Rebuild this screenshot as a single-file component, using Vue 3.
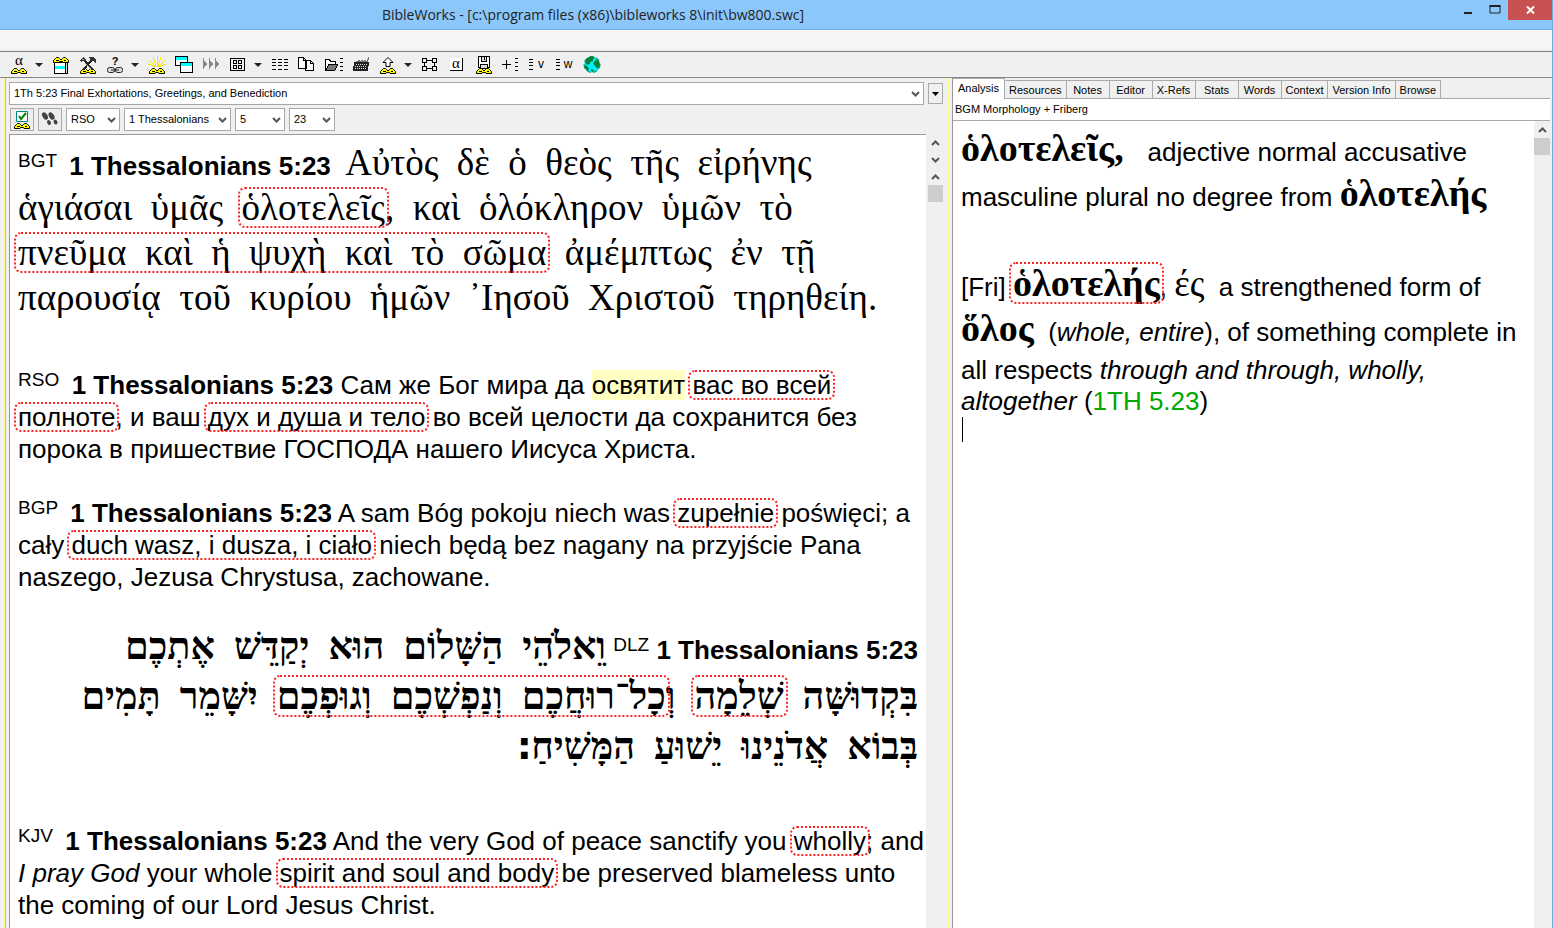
<script setup>
import { ref } from 'vue'

const tools = [
  { id: 'alpha', label: 'Command line', menu: true },
  { id: 'search', label: 'Search window' },
  { id: 'hammer', label: 'Tools' },
  { id: 'link', label: 'Help links', menu: true },
  { id: 'sun', label: 'Daylight mode' },
  { id: 'windows', label: 'Windows' },
  { id: 'parallel', label: 'Parallel versions' },
  { id: 'grid', label: 'Layout', menu: true },
  { id: 'lists', label: 'Verse lists' },
  { id: 'copy', label: 'Copy' },
  { id: 'folder', label: 'Open list' },
  { id: 'keyboard', label: 'Keyboard' },
  { id: 'up', label: 'Export', menu: true },
  { id: 'graph', label: 'Graph' },
  { id: 'lexicon', label: 'Lexicon' },
  { id: 'save', label: 'Save' },
  { id: 'add', label: 'Add to list' },
  { id: 'verse', label: 'Verse list' },
  { id: 'word', label: 'Word list' },
  { id: 'globe', label: 'Web' }
]
const tabs = ['Analysis', 'Resources', 'Notes', 'Editor', 'X-Refs', 'Stats', 'Words', 'Context', 'Version Info', 'Browse']
const active = ref('Analysis')

// Greek and Hebrew runs keep their double spaces between words.
const greek = [
  [{ t: 'Αὐτὸς  δὲ  ὁ  θεὸς  τῆς  εἰρήνης' }],
  [{ t: 'ἁγιάσαι  ὑμᾶς  ' }, { t: 'ὁλοτελεῖς', m: true }, { t: ',  καὶ  ὁλόκληρον  ὑμῶν  τὸ' }],
  [{ t: 'πνεῦμα  καὶ  ἡ  ψυχὴ  καὶ  τὸ  σῶμα', m: true }, { t: '  ἀμέμπτως  ἐν  τῇ' }],
  [{ t: 'παρουσίᾳ  τοῦ  κυρίου  ἡμῶν  ᾿Ιησοῦ  Χριστοῦ  τηρηθείη.' }]
]
const hebrew = [
  [{ t: 'וֵאלֹהֵי  הַשָּׁלוֹם  הוּא  יְקַדֵּשׁ  אֶתְכֶם' }],
  [{ t: 'בִּקְדוּשָּׁה  ' }, { t: 'שְׁלֵמָה', m: true }, { t: '  וְ' }, { t: 'כָל־רוּחֲכֶם  וְנַפְשְׁכֶם  וְגוּפְכֶם', m: true }, { t: '  יִשָּׁמֵר  תָּמִים' }],
  [{ t: 'בְּבוֹא  אֲדֹנֵינוּ  יֵשׁוּעַ  הַמָּשִׁיחַ' }, { t: '׃', end: true }]
]
</script>

<template>
  <div class="window">
    <svg class="defs" width="0" height="0" aria-hidden="true">
      <symbol id="book" viewBox="0 0 18 7">
        <path d="M1.500 6.500v-2l2-2 1-1h2l1 1L9 4l1.500-1.500 1-1h2l1 1 2 2v2H11l-.5-1h-3l-.5 1z" fill="#ff0" stroke="#000" shape-rendering="auto" />
        <path d="M4 4.500h2.500M11.500 4.500H14" stroke="#000" shape-rendering="crispEdges" />
      </symbol>
      <symbol id="chev" viewBox="0 0 9 6"><path d="M1 1l3.500 3.500L8 1" fill="none" stroke="#555" stroke-width="2" /></symbol>
    </svg>

    <header class="titlebar">
      <h1>BibleWorks - [c:\program files (x86)\bibleworks 8\init\bw800.swc]</h1>
      <div class="controls">
        <button aria-label="Minimize"><svg width="10" height="10"><path d="M1 8h8" stroke="#222" stroke-width="2" /></svg></button>
        <button aria-label="Maximize"><svg width="12" height="10"><path d="M1 1h10v7H1z" fill="none" stroke="#222" stroke-width="1" /><path d="M.5 1h11" stroke="#222" stroke-width="2" /></svg></button>
        <button class="close" aria-label="Close"><svg width="9" height="8"><path d="M1 .5l7 7M8 .5l-7 7" stroke="#fff" stroke-width="2" /></svg></button>
      </div>
    </header>
    <div class="menustrip"></div>

    <nav class="toolbar" aria-label="Tools">
      <template v-for="t in tools" :key="t.id">
        <button class="tool" :aria-label="t.label">
          <svg width="18" height="18" viewBox="0 0 18 18" shape-rendering="crispEdges">
            <template v-if="t.id === 'alpha'">
              <text x="9" y="9" class="glyph">α</text>
              <use href="#book" x="0" y="11" width="18" height="7" />
            </template>
            <template v-else-if="t.id === 'search'">
              <path d="M2 6h14v12H2z" fill="#000" /><path d="M3 7h10v10H3z" fill="#fff" /><path d="M14 7h1v10h-1z" fill="#ddd" />
              <path d="M3 10h10v3H3z" fill="#0ff" /><use href="#book" x="0" y="0" width="18" height="7" />
            </template>
            <template v-else-if="t.id === 'hammer'">
              <use href="#book" x="0" y="11" width="18" height="7" />
              <path d="M5 4l9 10M13 4L4 14" fill="none" stroke="#222" stroke-width="2" />
              <path d="M1 4l4-3 2 3-2 2-1-1-2 1zM10 1h4l3 3v3l-3-2h-2z" fill="#333" />
              <path d="M3 4l2-1M6 7l6 6" stroke="#999" />
            </template>
            <template v-else-if="t.id === 'link'">
              <text x="9" y="9" class="glyph mark">?</text>
              <g fill="#ddd" stroke="#222" shape-rendering="auto"><rect x="1.500" y="11.500" width="7" height="5" rx="2" /><rect x="9.500" y="11.500" width="7" height="5" rx="2" /><path d="M5 14h8" /></g>
            </template>
            <template v-else-if="t.id === 'sun'">
              <path d="M9 0v11M5 1l3 9M13 1l-3 9M1 4l7 7M17 4l-7 7M0 8l8 3M18 8l-8 3" stroke="#f8e800" />
              <use href="#book" x="0" y="11" width="18" height="7" />
            </template>
            <template v-else-if="t.id === 'windows'">
              <path d="M.5.500h12v9H.5z" fill="#fff" stroke="#000" /><path d="M1 1h11v3H1z" fill="#0ff" />
              <path d="M5.500 6.500h12v10h-12z" fill="#fff" stroke="#000" /><path d="M6 7h11v3H6z" fill="#0ff" />
            </template>
            <template v-else-if="t.id === 'parallel'">
              <path d="M1 2h1v11H1zM7 2h1v11H7zM13 2h1v11h-1z" fill="#888" />
              <path d="M2 5l3 3-3 3zM8 5l3 3-3 3zM14 5l3 3-3 3z" fill="#888" />
            </template>
            <g v-else-if="t.id === 'grid'" fill="none" stroke="#000">
              <path d="M1.500 2.500h14v12h-14zM4.500 4.500h3v3h-3zM9.500 4.500h3v3h-3zM4.500 9.500h3v3h-3zM9.500 9.500h3v3h-3z" />
            </g>
            <path v-else-if="t.id === 'lists'" d="M1 3.500h16M1 6.500h16M1 9.500h16M1 13.500h16" stroke="#000" stroke-dasharray="4 2" />
            <g v-else-if="t.id === 'copy'" fill="#fff" stroke="#000">
              <path d="M.5 1.500h5l3 3v8h-8zM5.500 1.500v3h3M7.500 4.500h5l3 3v7h-8zM12.500 4.500v3h3" />
            </g>
            <template v-else-if="t.id === 'folder'">
              <path d="M.5 13.500v-10h4l1 2h5v3" fill="#fff" stroke="#000" /><path d="M1 14l3-6h9l-3 6z" fill="#777" stroke="#000" />
              <path d="M15 2.500h3M15 6.500h3M15 10.500h3M15 14.500h3" stroke="#000" />
            </template>
            <template v-else-if="t.id === 'keyboard'">
              <path d="M4 6V5h2V4h1v1h2V4h1v1h2V4h1v1h2V3h1V1" fill="none" stroke="#777" />
              <path d="M2 6h15l-1 9H1z" fill="#222" />
              <path d="M4 8.500h12M3 10.500h12M3 12.500h12" stroke="#ddd" stroke-dasharray="1 1" />
            </template>
            <template v-else-if="t.id === 'up'">
              <path d="M9 1.500l5 5h-3v4H7v-4H4z" fill="#fff" stroke="#000" shape-rendering="auto" />
              <use href="#book" x="0" y="11" width="18" height="7" />
            </template>
            <g v-else-if="t.id === 'graph'" fill="none" stroke="#000">
              <path d="M1.500 2.500h4v4h-4zM11.500 2.500h4v4h-4zM1.500 10.500h4v4h-4zM11.500 10.500h4v4h-4zM6 4.500h5M6 12.500h5M3.500 7v3M13.500 7v3" />
            </g>
            <template v-else-if="t.id === 'lexicon'">
              <path d="M2 2h13v13H2z" fill="#fff" /><path d="M2 14.500h12.500V2" fill="none" stroke="#000" />
              <text x="8" y="12" class="glyph">α</text>
            </template>
            <template v-else-if="t.id === 'save'">
              <path d="M3.500.5h11v11h-11z" fill="#fff" stroke="#000" /><path d="M6.500.5h5v5h-5zM5.500 8.500h7v4h-7z" fill="#ddd" stroke="#000" />
              <path d="M9 1h1v3H9z" /><use href="#book" x="0" y="11" width="18" height="7" />
            </template>
            <path v-else-if="t.id === 'add'" d="M0 8.500h9M4.500 4v9M13 2.500h3M13 6.500h3M13 10.500h3M13 14.500h3" stroke="#000" />
            <template v-else-if="t.id === 'verse' || t.id === 'word'">
              <path d="M0 3.500h4M0 6.500h4M0 9.500h4M0 13.500h4" stroke="#000" />
              <text x="12" y="12" class="glyph latin">{{ t.id === 'verse' ? 'v' : 'w' }}</text>
            </template>
            <g v-else shape-rendering="auto">
              <circle cx="9" cy="8.500" r="8" fill="#0ef" />
              <path d="M4 2l5-2 3 2-2 1v2l-3 1v2l-3 1-2-3zM13 3l3 2 1 4-2 4-3-3-2-3 2-2zM1 9l3 1 2 3-1 2-3-2zM8 13l3 1-1 2-2-1z" fill="#078030" />
              <circle cx="9" cy="8.500" r="8" fill="none" stroke="#087a50" stroke-dasharray="4 3" />
            </g>
          </svg>
        </button>
        <button v-if="t.menu" class="more" :aria-label="t.label + ' options'"><svg width="8" height="4"><path d="M0 0h8L4 4z" fill="#222" /></svg></button>
      </template>
    </nav>

    <main class="body">
      <section class="left">
        <div class="refrow">
          <label class="combo wide">
            <select aria-label="Passage"><option>1Th 5:23 Final Exhortations, Greetings, and Benediction</option></select>
            <svg class="arrow" width="9" height="6"><use href="#chev" /></svg>
          </label>
          <button class="drop" aria-label="History"><svg width="7" height="4"><path d="M0 0h7L3.500 4z" /></svg></button>
        </div>
        <div class="pickrow">
          <button class="sq" aria-label="Versions">
            <svg width="18" height="18" viewBox="0 0 18 18"><path d="M3.500.5h11v10h-11z" fill="#fff" stroke="#088" /><path d="M6 5l2 3 5-6" fill="none" stroke="#080" stroke-width="2" /><use href="#book" y="11" width="18" height="7" /></svg>
          </button>
          <button class="sq" aria-label="Follow">
            <svg width="18" height="18" viewBox="0 0 18 18" fill="#444"><ellipse cx="4" cy="5" rx="2.500" ry="4" transform="rotate(-30 4 5)" /><ellipse cx="8" cy="11.500" rx="1.800" ry="2.500" transform="rotate(-30 8 11.500)" /><ellipse cx="10.500" cy="5" rx="2.500" ry="4" transform="rotate(-30 10.500 5)" /><ellipse cx="14.500" cy="11" rx="1.800" ry="2.500" transform="rotate(-30 14.500 11)" /></svg>
          </button>
          <label class="combo version"><select aria-label="Version"><option>RSO</option></select><svg class="arrow" width="9" height="6"><use href="#chev" /></svg></label>
          <label class="combo bookname"><select aria-label="Book"><option>1 Thessalonians</option></select><svg class="arrow" width="9" height="6"><use href="#chev" /></svg></label>
          <label class="combo chapter"><select aria-label="Chapter"><option>5</option></select><svg class="arrow" width="9" height="6"><use href="#chev" /></svg></label>
          <label class="combo verse"><select aria-label="Verse"><option>23</option></select><svg class="arrow" width="9" height="6"><use href="#chev" /></svg></label>
        </div>
        <div class="reader">
          <div class="verses">
            <article class="greek" lang="el">
              <p v-for="(line, i) in greek" :key="i"><template v-if="i === 0"><sup>{{ 'BGT ' }}</sup> <b>1 Thessalonians 5:23</b>{{ '  ' }}</template><span class="gk"><component :is="r.m ? 'mark' : 'span'" v-for="(r, j) in line" :key="j">{{ r.t }}</component></span></p>
            </article>
            <article>
              <p><sup>{{ 'RSO ' }}</sup> <b>1 Thessalonians 5:23</b> Сам же Бог мира да <span class="hl">освятит</span> <mark>вас во всей</mark></p>
              <p><mark>полноте</mark>, и ваш <mark>дух и душа и тело</mark> во всей целости да сохранится без</p>
              <p>порока в пришествие ГОСПОДА нашего Иисуса Христа.</p>
            </article>
            <article>
              <p><sup>{{ 'BGP ' }}</sup> <b>1 Thessalonians 5:23</b> A sam Bóg pokoju niech was <mark>zupełnie</mark> poświęci; a</p>
              <p>cały <mark>duch wasz, i dusza, i ciało</mark> niech będą bez nagany na przyjście Pana</p>
              <p>naszego, Jezusa Chrystusa, zachowane.</p>
            </article>
            <article class="hebrew" dir="rtl" lang="he">
              <p v-for="(line, i) in hebrew" :key="i"><template v-if="i === 0"><bdi dir="ltr"><b>1 Thessalonians 5:23</b></bdi> <bdi dir="ltr"><sup>DLZ</sup></bdi>{{ ' ' }}</template><span class="hb"><component :is="r.m ? 'mark' : 'span'" v-for="(r, j) in line" :key="j" :class="{ end: r.end }">{{ r.t }}</component></span></p>
            </article>
            <article>
              <p><sup>{{ 'KJV ' }}</sup> <b>1 Thessalonians 5:23</b> And the very God of peace sanctify you <mark>wholly</mark>; and</p>
              <p><i>I pray God</i> your whole <mark>spirit and soul and body</mark> be preserved blameless unto</p>
              <p>the coming of our Lord Jesus Christ.</p>
            </article>
          </div>
          <div class="scroll">
            <button aria-label="Previous verse"><svg class="flip" width="9" height="6"><use href="#chev" /></svg></button>
            <button aria-label="Next verse"><svg width="9" height="6"><use href="#chev" /></svg></button>
            <button aria-label="Scroll up"><svg class="flip" width="9" height="6"><use href="#chev" /></svg></button>
            <div class="thumb"></div>
          </div>
        </div>
      </section>

      <aside class="right">
        <div class="tabs" role="tablist">
          <button v-for="t in tabs" :key="t" role="tab" :aria-selected="active === t" :class="{ on: active === t }" @click="active = t">{{ t }}</button>
        </div>
        <div class="source">BGM Morphology + Friberg</div>
        <div class="reader">
          <div class="analysis">
            <p class="tall"><b class="gk">ὁλοτελεῖς, </b>{{ '  adjective normal accusative' }}</p>
            <p class="tall">masculine plural no degree from <b class="gk">ὁλοτελής</b></p>
            <p class="tall">&nbsp;</p>
            <p class="tall">[Fri] <b class="gk"><mark>ὁλοτελής</mark></b>, <span class="gk">ές</span>{{ '  a strengthened form of' }}</p>
            <p class="tall"><b class="gk">ὅλος</b>{{ '  (' }}<i>whole, entire</i>), of something complete in</p>
            <p>all respects <i>through and through, wholly,</i></p>
            <p><i>altogether</i> (<a href="#1th5.23">1TH 5.23</a>)</p>
            <div class="caret"></div>
          </div>
          <div class="scroll">
            <button aria-label="Scroll up"><svg class="flip" width="9" height="6"><use href="#chev" /></svg></button>
            <div class="thumb"></div>
          </div>
        </div>
      </aside>
    </main>
  </div>
</template>

<style>
html, body { margin: 0; background: #f0f0f0; }
</style>

<style scoped>
* { box-sizing: border-box; }
button { padding: 0; border: 0; background: none; font: inherit; color: inherit; display: flex; align-items: center; justify-content: center; }
p { margin: 0; }
svg { flex: none; overflow: visible; }
.defs { position: absolute; }
.window { height: 100vh; display: flex; flex-direction: column; overflow: hidden; background: #f0f0f0; border-right: 1px solid #6fa9dc; color: #000; font: 11px "Liberation Sans", Arial, sans-serif; }
.titlebar { height: 30px; flex: none; background: #8cc7fb; border-bottom: 1px solid #74addf; display: grid; grid-template-columns: 1fr auto; position: relative; }
h1 { grid-column: 1 / 3; grid-row: 1; margin: 0; padding-right: 366px; text-align: center; font: 14px/29px "Open Sans", "Noto Sans", sans-serif; color: #222; white-space: nowrap; }
.controls { grid-column: 2; grid-row: 1; display: flex; height: 20px; }
.controls button { width: 27px; }
.controls .close { width: 44px; background: #c75050; }
.menustrip { height: 22px; flex: none; background: #f5f6f7; border-bottom: 1px solid #808080; box-shadow: inset 0 -2px #f0f0f0; }
.toolbar { height: 26px; flex: none; display: flex; align-items: stretch; padding-left: 5px; border-bottom: 1px solid #888; }
.tool { width: 27px; }
.more { width: 14px; margin-right: 1px; }
.glyph { font: 15px "Liberation Serif", serif; text-anchor: middle; }
.mark { font: bold 11px "Liberation Sans", sans-serif; }
.latin { font: 12px "Liberation Sans", sans-serif; }
.body { flex: 1; min-height: 0; display: grid; grid-template-columns: minmax(0, 949fr) minmax(0, 603fr); }
.left { display: flex; flex-direction: column; min-height: 0; margin-left: 4px; padding: 4px 5px 0 3px; border-left: 1px solid #ffff90; border-right: 1px solid #ffff90; box-shadow: inset 1px 0 #bbb; }
.refrow { display: flex; gap: 4px; padding-left: 1px; align-items: center; }
.combo { display: block; position: relative; height: 23px; }
.combo.wide { flex: 1; }
select { appearance: none; width: 100%; height: 100%; margin: 0; padding: 0 16px 2px 4px; border: 1px solid #a8a8a8; border-radius: 0; background: #fff; color: #000; font: 11px "Liberation Sans", Arial, sans-serif; outline: 0; }
.arrow { position: absolute; right: 4px; top: 9px; pointer-events: none; }
.drop { width: 15px; height: 21px; border: 1px solid #aaa; }
.pickrow { display: flex; gap: 4px; padding: 3px 0 3px 2px; }
.sq { width: 24px; height: 23px; border: 1px solid #aaa; background: #ededed; }
.version { width: 54px; }
.bookname { width: 107px; }
.chapter { width: 50px; }
.verse { width: 46px; }
.reader { flex: 1; min-height: 0; display: flex; }
.verses { flex: 1; min-width: 0; margin-left: 1px; padding: 9px 8px 0 8px; background: #fff; border: 1px solid #999; border-width: 1px 0 0 1px; overflow: hidden; display: flex; flex-direction: column; }
.verses { font-size: 26px; line-height: 32px; white-space: pre; }
article { margin-bottom: 32px; }
.greek { line-height: 45px; margin-bottom: 45px; }
.hebrew { line-height: 50px; margin: 0 0 50px; }
.gk, .hb, sup, b, mark, bdi, i { line-height: 0; }
.gk { font-family: "Liberation Serif", "Times New Roman", serif; font-size: 37px; }
b.gk { font-size: 38px; }
.hb { font-family: "Liberation Serif", "Times New Roman", serif; font-size: 38px; font-weight: bold; }
.end { font-family: "DejaVu Sans", sans-serif; }
sup { font-size: 19px; vertical-align: 8px; }
mark { position: relative; background: none; color: inherit; }
mark::after { content: ""; position: absolute; inset: 0 -4px; border: 2px dotted #f22; border-radius: 7px; }
.hl { background: #ffffc4; }
.scroll { width: 17px; padding: 0 0 0 2px; display: flex; flex-direction: column; }
.scroll button { height: 17px; }
.thumb { height: 17px; background: #cdcdcd; }
.flip { transform: rotate(180deg); }
.right { display: flex; flex-direction: column; min-height: 0; margin-left: 3px; padding-right: 2px; border-left: 1px solid #999; }
.tabs { height: 21px; display: flex; align-items: flex-end; border-bottom: 1px solid #aaa; }
.tabs button { height: 18px; min-width: 43px; padding: 0 4px; border: 1px solid #aaa; border-left: 0; border-bottom: 0; font-size: 11px; }
.tabs .on { height: 21px; margin-bottom: -1px; padding: 0 5px 2px; background: #fff; }
.source { height: 22px; padding: 3px 2px; background: #fff; border-bottom: 1px solid #aaa; line-height: 14px; }
.analysis { flex: 1; min-width: 0; padding: 9px 0 0 8px; background: #fff; overflow: hidden; font-size: 26px; line-height: 31px; white-space: pre; }
.tall { line-height: 45px; }
.analysis a { color: #00a800; text-decoration: none; }
.caret { width: 1px; height: 25px; margin: 0 0 0 1px; background: #000; }
.right .scroll { width: 16px; padding: 0; }
</style>
